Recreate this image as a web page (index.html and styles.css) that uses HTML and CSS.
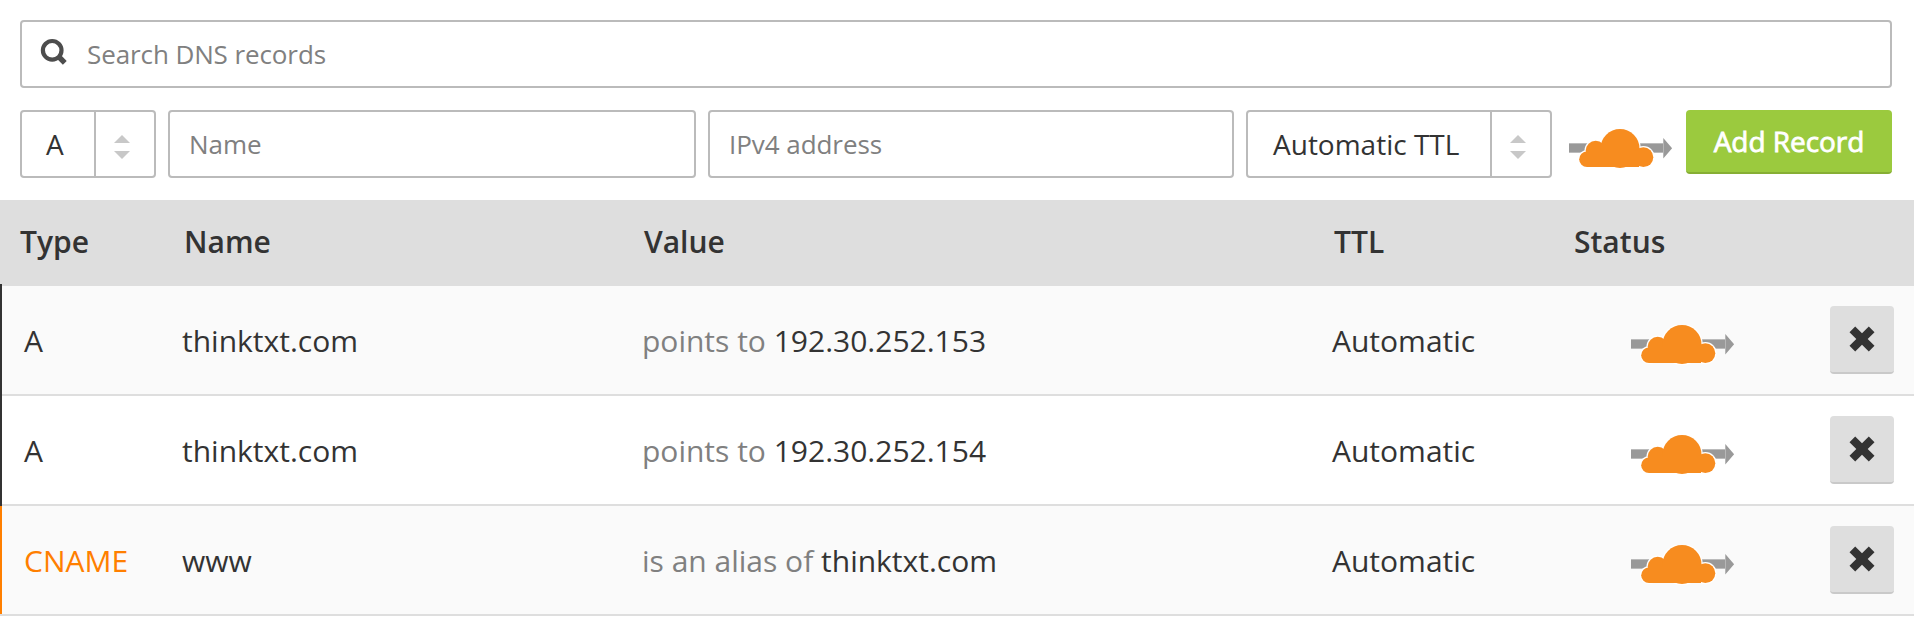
FILE: index.html
```
<!DOCTYPE html>
<html lang="en">
<head>
<meta charset="utf-8">
<title>DNS Records</title>
<link rel="stylesheet" href="styles.css">
</head>
<body>
<svg class="sprite" aria-hidden="true">
  <symbol id="cloud" viewBox="0 0 104 40">
    <path fill="#bbb" d="M0 14h94v10H0z"/>
    <path fill="#999" d="M0 15h94v8H0zM94.3 9l8.800 10.200-8.800 10.300z"/>
    <g fill="#fff" stroke="#fff" stroke-width="2.600">
      <circle cx="18" cy="30" r="7.800"/><circle cx="26.700" cy="21.700" r="10"/><circle cx="51" cy="19.500" r="19.500"/><circle cx="74.400" cy="28.200" r="9.900"/>
    </g>
    <g fill="#f78c1f">
      <circle cx="18" cy="30.200" r="7.800"/><circle cx="26.700" cy="21.700" r="10"/><circle cx="51" cy="19.500" r="19.500"/><circle cx="74.400" cy="28.200" r="9.900"/><path d="M18 22h52v16H18z"/>
    </g>
  </symbol>
  <symbol id="cross" viewBox="0 0 26 26">
    <path fill="#333" d="M6.200.5 13 7.300 19.800.5 25.500 6.200 18.700 13l6.800 6.800-5.700 5.700L13 18.700 6.200 25.500.5 19.800 7.300 13 .5 6.200z"/>
  </symbol>
</svg>

<div class="controls">
  <label class="search">
    <svg class="search-icon" viewBox="0 0 28 28"><circle cx="12.200" cy="12.300" r="9.300" fill="none" stroke="#4d4d4d" stroke-width="4.200"/><path d="M18 18 24.800 24.800" stroke="#4d4d4d" stroke-width="5.400"/></svg>
    <input class="search-input" placeholder="Search DNS records">
  </label>
  <div class="add-row">
    <div class="select select-type"><span class="select-label">A</span><span class="select-arrows"><svg width="16" height="24"><path fill="#c8c8c8" d="M8 0l8 8H0zM0 16h16l-8 8z"/></svg></span></div>
    <input class="field" placeholder="Name">
    <input class="field field-value" placeholder="IPv4 address">
    <div class="select select-ttl"><span class="select-label">Automatic TTL</span><span class="select-arrows"><svg width="16" height="24"><path fill="#c8c8c8" d="M8 0l8 8H0zM0 16h16l-8 8z"/></svg></span></div>
    <svg class="cloud"><use href="#cloud"/></svg>
    <button class="add">Add Record</button>
  </div>
</div>

<div class="table">
  <div class="row head"><span>Type</span><span>Name</span><span>Value</span><span>TTL</span><span>Status</span></div>
  <div class="row record">
    <span class="type">A</span><span>thinktxt.com</span><span><span class="muted">points to</span> 192.30.252.153</span><span>Automatic</span>
    <svg class="cloud"><use href="#cloud"/></svg><button class="delete"><svg class="cross"><use href="#cross"/></svg></button>
  </div>
  <div class="row record">
    <span class="type">A</span><span>thinktxt.com</span><span><span class="muted">points to</span> 192.30.252.154</span><span>Automatic</span>
    <svg class="cloud"><use href="#cloud"/></svg><button class="delete"><svg class="cross"><use href="#cross"/></svg></button>
  </div>
  <div class="row record cname">
    <span class="type">CNAME</span><span>www</span><span><span class="muted">is an alias of</span> thinktxt.com</span><span>Automatic</span>
    <svg class="cloud"><use href="#cloud"/></svg><button class="delete"><svg class="cross"><use href="#cross"/></svg></button>
  </div>
</div>
</body>
</html>
```

FILE: styles.css
```
* { box-sizing: border-box; }
body { margin: 0; background: #fff; color: #333; font: 30px/40px "Open Sans", "Noto Sans", sans-serif; overflow: hidden; }
input, button { font: inherit; margin: 0; }
svg { display: block; flex: none; }
.sprite { position: absolute; width: 0; height: 0; }

.controls { display: flex; flex-direction: column; gap: 22px; height: 200px; padding: 20px 22px 22px 20px; }
.search { display: flex; align-items: center; height: 68px; padding-left: 18px; border: 2px solid #bbb; border-radius: 4px; }
.search-icon { width: 28px; height: 28px; margin-bottom: 4px; }
.search-input { flex: 1; height: 60px; padding: 0 0 0 19px; border: 0; background: none; font-size: 26px; letter-spacing: -.1px; }
::placeholder { color: #808080; opacity: 1; }

.add-row { display: flex; align-items: flex-start; height: 68px; }
.select { display: flex; height: 68px; border: 2px solid #bbb; border-radius: 4px; font-size: 28px; }
.select-label { flex: 1; display: flex; align-items: center; padding-left: 24px; padding-bottom: 1px; }
.select-arrows { display: flex; align-items: center; width: 60px; padding: 6px 0 0 18px; border-left: 2px solid #bbb; }
.select-type { width: 136px; margin-right: 12px; }
.select-ttl { width: 306px; margin-right: 17px; }
.select-ttl .select-label { padding-left: 25px; }
.field { width: 528px; height: 68px; margin-right: 12px; padding: 0 19px; border: 2px solid #bbb; border-radius: 4px; background: #fff; font-size: 26px; letter-spacing: -.05px; }
.field-value { width: 526px; }
.cloud { width: 104px; height: 40px; }
.add-row .cloud { margin: 19px 13px 0 0; }
.add { width: 206px; height: 64px; padding: 0 0 1px; border: 0; border-bottom: 2px solid #86ae34; border-radius: 4px; background: #9bca3e; color: #fff; font-size: 28px; letter-spacing: -.05px; -webkit-text-stroke: .8px #fff; }

.row { display: grid; grid-template-columns: 158px 460px 690px 299px 199px 64px; align-items: center; }
.head { grid-template-columns: 164px 460px 690px 240px 1fr; height: 86px; padding: 0 0 3px 20px; background: #dedede; font-weight: 600; }
.record { position: relative; height: 110px; padding: 0 0 0 24px; border-bottom: 2px solid #dedede; }
.record:nth-child(even) { background: #fafafa; }
.record::before { content: ""; position: absolute; left: 0; top: -2px; width: 2px; height: 112px; background: #333; }
.record > span { padding-top: 2px; }
.cname::before { top: 0; height: 108px; background: #ff7f00; }
.cname .type { color: #ff7f00; }
.muted { color: #808080; }
.record .cloud { margin-top: 10px; }
.delete { display: flex; align-items: center; justify-content: center; width: 64px; height: 68px; padding: 0; border: 0; border-bottom: 2px solid #c9c9c9; border-radius: 4px; background: #dedede; }
.cross { width: 26px; height: 26px; }
```
